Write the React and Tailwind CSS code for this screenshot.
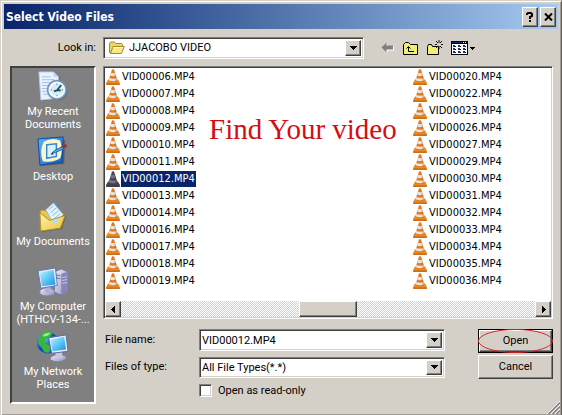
import React, { useState } from 'react';
import clsx from 'clsx';

const LEFT_FILES = ['06', '07', '08', '09', '10', '11', '12', '13', '14', '16', '17', '18', '19'];
const RIGHT_FILES = ['20', '22', '23', '26', '27', '29', '30', '31', '32', '33', '34', '35', '36'];

const RAISED =
  'bg-[#d4d0c8] border border-t-white border-l-white border-r-[#404040] border-b-[#404040] shadow-[inset_-1px_-1px_0_#808080]';
const SUNKEN =
  'bg-white border border-t-[#808080] border-l-[#808080] border-r-white border-b-white shadow-[inset_1px_1px_0_#404040,inset_-1px_-1px_0_#d4d0c8]';

function Arrow({ dir = 'down' }) {
  const paths = {
    down: 'M0 1h7v1H6v1H5v1H4v1H3V4H2V3H1V2H0z',
    left: 'M5 0v7H4V6H3V5H2V4H1V3h1V2h1V1h1V0z',
    right: 'M2 0v7h1V6h1V5h1V4h1V3H5V2H4V1H3V0z',
  };
  return (
    <svg width="7" height="7" viewBox="0 0 7 7" shapeRendering="crispEdges" aria-hidden="true">
      <path d={paths[dir]} />
    </svg>
  );
}

function FolderIcon() {
  return (
    <svg width="17" height="16" viewBox="0 0 17 16" className="shrink-0" aria-hidden="true">
      <path d="M1.5 12.5V3.5l1-1.5h4l1.5 1.5h5.5l1 1V8L12 13.5z" fill="#eed568" stroke="#a38a32" />
      <path d="M2.5 13.5 5 6.5h11.3l-2.8 7z" fill="#f8e888" stroke="#a38a32" />
      <path d="M5.7 7.5h9" stroke="#fffbd2" />
    </svg>
  );
}

function ConeIcon({ selected }) {
  const main = selected ? '#4d4254' : '#e07a24';
  const base = selected ? '#4a3f50' : '#ee8a1c';
  const dark = selected ? '#332b48' : '#b9560c';
  const pale = selected ? '#77748a' : '#e9e6e0';
  return (
    <svg width="14" height="16" viewBox="0 0 14 16" className="shrink-0" aria-hidden="true">
      <path d="M2 10.5h10l1.8 3.2v2H.2v-2z" fill={base} />
      <path d="M.2 14.6h13.6v1.1H.2z" fill={dark} />
      <path d="M6 .6q1-.7 2 0L11.6 12q-4.6 2.6-9.2 0z" fill={main} />
      <path d="M5 3.8q2 .8 4 0l.9 2.8q-2.9 1.3-5.8 0zM3.4 8.9q3.6 1.6 7.2 0l.7 2.3q-4.3 2.2-8.6 0z" fill={pale} />
      <path d="M7.9 1 11.6 12l-2.2 1z" fill={dark} opacity=".3" />
    </svg>
  );
}

function PlaceDefs() {
  return (
    <svg width="0" height="0" className="absolute" aria-hidden="true">
      <defs>
        <linearGradient id="screen" x1="0" y1="0" x2="1" y2="1">
          <stop offset="0" stopColor="#b8f4ff" />
          <stop offset=".55" stopColor="#55c2f5" />
          <stop offset="1" stopColor="#258ade" />
        </linearGradient>
        <linearGradient id="folder" x1="0" y1="0" x2="1" y2="1">
          <stop offset="0" stopColor="#fff4a4" />
          <stop offset="1" stopColor="#e6c345" />
        </linearGradient>
        <linearGradient id="frame" x1="0" y1="0" x2="1" y2="1">
          <stop offset="0" stopColor="#5eb5f2" />
          <stop offset="1" stopColor="#155dc0" />
        </linearGradient>
        <linearGradient id="case" x1="0" y1="0" x2="1" y2="1">
          <stop offset="0" stopColor="#f1f0fb" />
          <stop offset="1" stopColor="#8e8fbb" />
        </linearGradient>
        <radialGradient id="globe" cx=".3" cy=".3">
          <stop offset="0" stopColor="#7ac4ff" />
          <stop offset="1" stopColor="#1346b4" />
        </radialGradient>
      </defs>
    </svg>
  );
}

function RecentIcon() {
  return (
    <>
      <path d="M3 2h16l5 5v22l-20 2z" fill="#555" opacity=".5" />
      <path d="M2 1h15l5 5v22l-18 2z" fill="#e9f2ff" stroke="#b4c9ec" />
      <path d="M17 1v5h5" fill="#bdd3f5" />
      <path d="M5 6h9M5 9h13M5 12h12M5 15h8M5 18h6M5 21h5M6 24h5" stroke="#a2bce9" />
      <circle cx="21.5" cy="20.5" r="10" fill="#555" opacity=".6" />
      <circle cx="20.5" cy="19.5" r="9.6" fill="#edf4f9" stroke="#7295b8" strokeWidth="1.8" />
      <circle cx="20.5" cy="19.5" r="7" fill="#d5edf6" stroke="#fff" />
      <path d="M20.5 13v1.5M20.5 25v1M14 19.5h1.5M25.5 19.5H27" stroke="#56728a" />
      <path d="m25 14.5-4.5 5.5h4M20.5 20l-3 1" fill="none" stroke="#174c61" strokeWidth="1.8" />
    </>
  );
}

function DesktopIcon() {
  return (
    <>
      <path d="m3 3 26 1-1 25-25 2z" fill="#444" opacity=".6" />
      <path d="m1 3 26-2-1 26-23 3z" fill="url(#frame)" stroke="#0b4aa6" />
      <path d="M7 6q9-5 17-1 3 10 0 18-8 5-18 3Q2 15 7 6z" fill="#fcf6ce" />
      <path d="m10 9 10-1v13l-10 2z" fill="#d9efff" stroke="#3489cc" strokeWidth="1.5" />
      <path d="m15 18 3-3 8-4 2 2-9 4z" fill="#5aacde" stroke="#25649b" />
      <path d="m25 11 5-3 1 3-4 2z" fill="#a42e2b" />
      <path d="m14 19 2-2 1 2z" fill="#163355" />
    </>
  );
}

function DocumentsIcon() {
  return (
    <>
      <path d="m5 12 25 3-4 14-22 3z" fill="#444" opacity=".5" />
      <path d="M3 29V11l2-2 5 1 2 3 11-3 3 2v13z" fill="#e8c552" stroke="#a98520" />
      <path d="m9 9 8-7 10 12-9 11z" fill="#e2f4ff" stroke="#8db9dc" />
      <path d="m12 9 5-4m-3 7 6-5m-4 8 6-5m-4 8 6-5" stroke="#81bce6" />
      <path d="m3 12 10 8 16-5-5 13-20 3z" fill="url(#folder)" stroke="#b18d28" />
      <path d="m16 21 3-3 3 1-1 4-4 1z" fill="#b2ddec" />
    </>
  );
}

function ComputerIcon() {
  return (
    <>
      <path d="m18 6 7-3 7 3v20l-7 4-7-3z" fill="url(#case)" stroke="#7777ad" />
      <path d="m25 8 7-2v20l-7 4z" fill="#8587b6" />
      <path d="M19 9l5 1m-5 2 5 1" stroke="#62649c" />
      <path d="M26 12l5-1m-5 4 5-1m-5 4 5-1" stroke="#c5c7e7" />
      <path d="M3 25q7-5 15 0v4q-8 4-15 0z" fill="url(#case)" stroke="#8181aa" />
      <path d="M8 20h6v7H8z" fill="#aeb1d3" />
      <path d="m1 5 18-3 2 18-17 3z" fill="#e4e9f6" stroke="#5f78a9" />
      <path d="m3 7 14-3 2 15-14 2z" fill="url(#screen)" />
    </>
  );
}

function NetworkIcon() {
  return (
    <>
      <circle cx="11" cy="12" r="11" fill="url(#globe)" />
      <path d="M3 5q6-7 13-3l-3 5-4 1-1 5 6 2-1 7q-6 2-8-5L1 13z" fill="#35b73d" />
      <path d="M6 4q4-3 8-2l-3 3-4 1z" fill="#a0e985" />
      <path d="M14 27q7-5 16-1v3q-8 5-16 1z" fill="url(#case)" stroke="#8181aa" />
      <path d="M19 20h7v8h-7z" fill="#c7c9df" />
      <path d="m12 7 18-3 2 17-17 2z" fill="#e9edf8" stroke="#536c9c" />
      <path d="m14 9 14-3 2 13-14 2z" fill="url(#screen)" />
    </>
  );
}

const PLACES = [
  { lines: ['My Recent', 'Documents'], Icon: RecentIcon },
  { lines: ['Desktop'], Icon: DesktopIcon },
  { lines: ['My Documents'], Icon: DocumentsIcon },
  { lines: ['My Computer', '(HTHCV-134-...'], Icon: ComputerIcon },
  { lines: ['My Network', 'Places'], Icon: NetworkIcon },
];

function TitleBar() {
  return (
    <header className="flex h-[25px] items-center gap-0.5 bg-linear-to-r from-[#0a246a] to-[#a6caf0] pr-0.5 pl-0.5">
      <h1 className="flex-1 font-['DejaVu_Sans_Condensed','DejaVu_Sans',sans-serif] text-[12px] font-bold text-white">
        Select Video Files
      </h1>
      <button type="button" aria-label="Help" className={clsx(RAISED, 'flex h-5 w-4 items-center justify-center')}>
        <svg width="8" height="10" viewBox="0 0 8 10" fill="none" stroke="#000" strokeWidth="2" aria-hidden="true">
          <path d="M1 3V2l1-1h3l1 1v2L4 5v2M4 8v2" />
        </svg>
      </button>
      <button type="button" aria-label="Close" className={clsx(RAISED, 'flex h-5 w-4 items-center justify-center')}>
        <svg width="9" height="8" viewBox="0 0 9 8" stroke="#000" strokeWidth="2" aria-hidden="true">
          <path d="m1 .5 7 7M8 .5l-7 7" />
        </svg>
      </button>
    </header>
  );
}

function Toolbar() {
  return (
    <div className="flex items-center gap-2 pl-[17px]">
      <button type="button" aria-label="Back">
        <svg width="14" height="12" viewBox="0 0 14 12" aria-hidden="true">
          <path d="m1.5 6.5 5-5v3H13v4H6.5v3z" fill="#fff" />
          <path d="m.5 5.5 5-5v3H12v4H5.5v3z" fill="#808080" />
        </svg>
      </button>
      <button type="button" aria-label="Up one level">
        <svg width="16" height="15" viewBox="0 0 16 15" fill="none" stroke="#000" aria-hidden="true">
          <path d="M.5 13.5v-10l2-2h3l2 2h7v10z" fill="#f2ee70" />
          <path d="M11 10.5H5.5V6M3.5 7.5l2-2 2 2" />
        </svg>
      </button>
      <button type="button" aria-label="Create new folder">
        <svg width="16" height="16" viewBox="0 0 16 16" fill="none" stroke="#000" aria-hidden="true">
          <path d="M.5 14.5v-8l1-2h3l1 2h6v8z" fill="#f2ee70" />
          <path d="M12 0v3M12 6v3M8 4.5h2M14 4.5h2M9 1l2 2M15 1l-2 2M15 8l-2-2M9 8l2-2" strokeWidth=".9" />
        </svg>
      </button>
      <button type="button" aria-label="View menu" className="flex items-center gap-px">
        <svg width="17" height="14" viewBox="0 0 17 14" shapeRendering="crispEdges" aria-hidden="true">
          <path d="M0 0h17v14H0z" />
          <path d="M1 3h15v10H1z" fill="#fff" />
          <path d="M1 1h10v1H1z" fill="#1a2a6c" />
          <path d="M12 1h1v1h-1zM14 1h1v1h-1z" fill="#fff" />
          <path
            d="M2 4h2v2H2zM2 7h2v2H2zM2 10h2v2H2zM7 4h2v2H7zM7 7h2v2H7zM7 10h2v2H7zM12 4h2v2h-2zM12 7h2v2h-2zM12 10h2v2h-2z"
            fill="#1f2f78"
          />
          <path d="M4 5h1v1H4zM4 8h1v1H4zM4 11h1v1H4zM9 5h1v1H9zM9 8h1v1H9zM9 11h1v1H9zM14 5h1v1h-1zM14 8h1v1h-1zM14 11h1v1h-1z" />
        </svg>
        <svg width="7" height="5" viewBox="0 0 7 5" shapeRendering="crispEdges" aria-hidden="true">
          <path d="M1 1h5v1H5v1H4v1H3V3H2V2H1z" />
        </svg>
      </button>
    </div>
  );
}

function DropArrow() {
  return (
    <span
      className={clsx(
        RAISED,
        'pointer-events-none absolute top-0.5 right-0.5 bottom-0.5 flex w-4 items-center justify-center'
      )}
    >
      <Arrow />
    </span>
  );
}

function PlacesBar() {
  return (
    <nav
      aria-label="Places"
      className="flex flex-col border-2 border-t-[#404040] border-r-white border-b-white border-l-[#404040] bg-[#808080] pt-[3px] pb-1.5"
    >
      {PLACES.map(({ lines, Icon }) => (
        <button
          key={lines[0]}
          type="button"
          className="flex h-[65px] flex-col items-center gap-0.5 leading-[13px] whitespace-nowrap text-white"
        >
          <svg width="32" height="32" viewBox="0 0 33 33" className="shrink-0" aria-hidden="true">
            <Icon />
          </svg>
          <span>
            {lines.map((line) => (
              <span key={line} className="block">{line}</span>
            ))}
          </span>
        </button>
      ))}
    </nav>
  );
}

function FileColumn({ files, selected, onSelect }) {
  return (
    <ul>
      {files.map((n) => {
        const name = `VID000${n}.MP4`;
        const active = name === selected;
        return (
          <li key={n}>
            <button type="button" onClick={() => onSelect(name)} className="flex h-[17px] items-center gap-px">
              <ConeIcon selected={active} />
              <span className={clsx('px-px leading-4', active && 'bg-[#0a246a] text-white')}>{name}</span>
            </button>
          </li>
        );
      })}
    </ul>
  );
}

function ScrollBar() {
  return (
    <div className="flex h-4 bg-[repeating-conic-gradient(#d4d0c8_0_25%,#fff_0_50%)] bg-size-[2px_2px]">
      <button type="button" aria-label="Scroll left" className={clsx(RAISED, 'flex w-4 items-center justify-center')}>
        <Arrow dir="left" />
      </button>
      <div className="flex flex-1">
        <div className="w-[43%]" />
        <div className={clsx(RAISED, 'w-[14%]')} />
      </div>
      <button type="button" aria-label="Scroll right" className={clsx(RAISED, 'flex w-4 items-center justify-center')}>
        <Arrow dir="right" />
      </button>
    </div>
  );
}

export default function App() {
  const [fileName, setFileName] = useState('VID00012.MP4');
  const [readOnly, setReadOnly] = useState(false);

  return (
    <div className="relative min-h-screen border border-t-[#d4d0c8] border-r-[#606060] border-b-[#606060] border-l-[#d4d0c8] bg-[#d4d0c8] font-[Roboto,'Liberation_Sans',sans-serif] text-[11px] text-black shadow-[inset_1px_1px_0_#fff,inset_-1px_-1px_0_#a09c94]">
      <PlaceDefs />
      <div className="p-[3px]">
        <TitleBar />

        <div className="grid grid-cols-[86px_1fr] gap-x-[7px] gap-y-[7px] pt-2 pr-[5px] pb-2 pl-1.5">
          <label htmlFor="look-in" className="self-center text-right">Look in:</label>
          <div className="flex h-[22px]">
            <div className={clsx(SUNKEN, 'relative flex w-[58%] items-center pl-1')}>
              <FolderIcon />
              <select id="look-in" className="h-full w-full appearance-none pl-1 outline-none">
                <option>JJACOBO VIDEO</option>
              </select>
              <DropArrow />
            </div>
            <Toolbar />
          </div>

          <PlacesBar />

          <main>
            <div className={clsx(SUNKEN, 'relative p-px')}>
              <div className="grid grid-cols-[69%_31%] pb-3 pl-px font-['DejaVu_Sans_Condensed','DejaVu_Sans',sans-serif]">
                <FileColumn files={LEFT_FILES} selected={fileName} onSelect={setFileName} />
                <FileColumn files={RIGHT_FILES} selected={fileName} onSelect={setFileName} />
              </div>
              <p className="absolute top-11 left-[105px] font-['Liberation_Serif',serif] text-[29px] leading-9 whitespace-nowrap text-[#d40d12]">
                Find Your video
              </p>
              <ScrollBar />
            </div>

            <div className="flex gap-[33px] pt-2.5">
              <form className="grid flex-1 grid-cols-[94px_1fr] items-center gap-y-1.5 pl-0.5">
                <label htmlFor="file-name">File name:</label>
                <div className={clsx(SUNKEN, 'relative h-[22px] p-0.5')}>
                  <input
                    id="file-name"
                    type="text"
                    value={fileName}
                    onChange={(e) => setFileName(e.target.value)}
                    className="h-full w-full outline-none"
                  />
                  <DropArrow />
                </div>

                <label htmlFor="file-type">Files of type:</label>
                <div className={clsx(SUNKEN, 'relative h-[21px] p-0.5')}>
                  <select id="file-type" className="block h-full w-full appearance-none outline-none">
                    <option>All File Types(*.*)</option>
                  </select>
                  <DropArrow />
                </div>

                <label className="col-start-2 flex items-center gap-1.5 leading-[13px]">
                  <input
                    type="checkbox"
                    checked={readOnly}
                    onChange={(e) => setReadOnly(e.target.checked)}
                    className={clsx(SUNKEN, 'h-[13px] w-[13px] appearance-none checked:bg-[#0a246a]')}
                  />
                  Open as read-only
                </label>
              </form>

              <div className="flex w-[75px] flex-col gap-0.5">
                <button type="button" className="relative h-6 border border-black">
                  <span className={clsx(RAISED, 'flex h-full items-center justify-center')}>Open</span>
                  <svg
                    viewBox="0 0 75 24"
                    className="absolute -inset-px h-6 w-[75px]"
                    fill="none"
                    stroke="#d8262c"
                    aria-hidden="true"
                  >
                    <ellipse cx="37.5" cy="12" rx="37" ry="11.5" />
                  </svg>
                </button>
                <button type="button" className={clsx(RAISED, 'h-6')}>Cancel</button>
              </div>
            </div>
          </main>
        </div>
      </div>

      <svg width="13" height="13" viewBox="0 0 13 13" className="absolute right-px bottom-px" aria-hidden="true">
        <path d="M0 13 13 0M4 13l9-9M8 13l5-5" stroke="#fff" />
        <path d="M1.5 13 13 1.5M5.5 13 13 5.5M9.5 13 13 9.5" stroke="#808080" strokeWidth="1.5" />
      </svg>
    </div>
  );
}
